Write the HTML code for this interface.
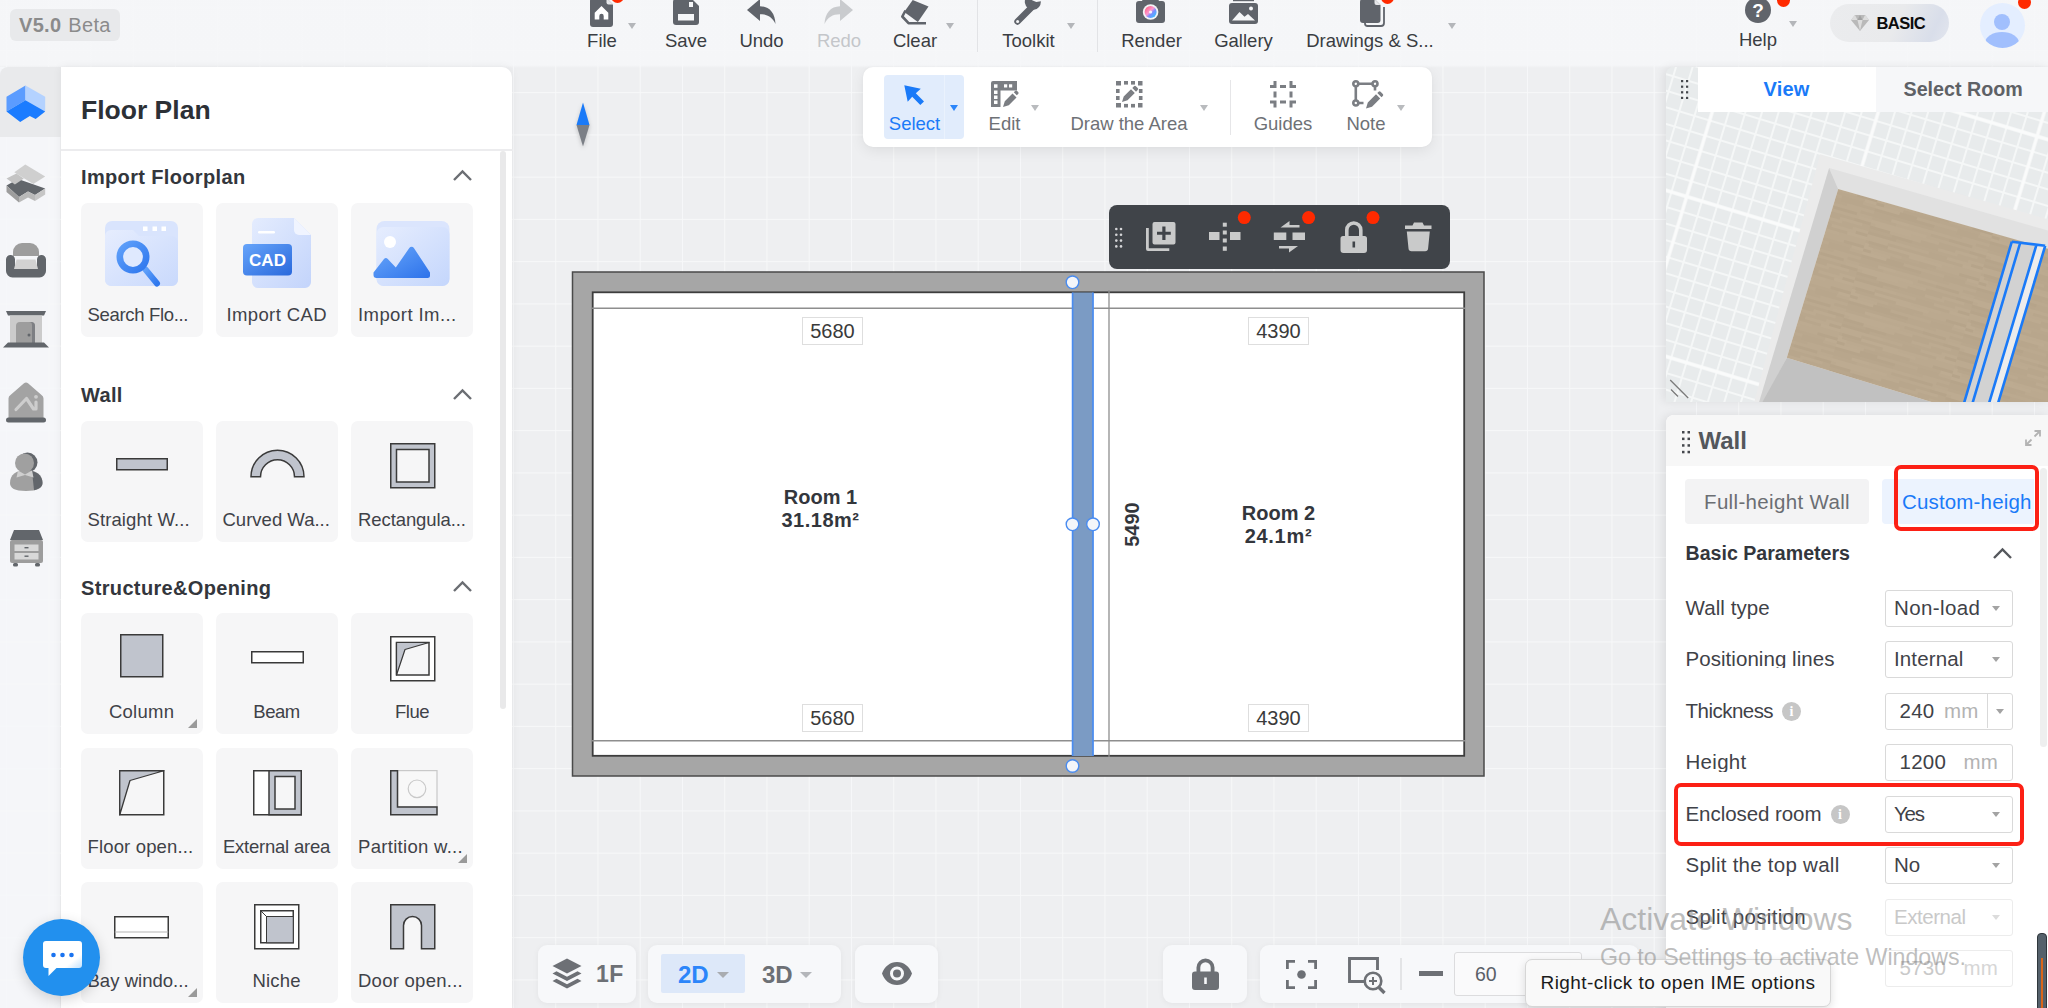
<!DOCTYPE html>
<html lang="en">
<head>
<meta charset="utf-8">
<title>Floor Plan Editor</title>
<style>
*{box-sizing:border-box;margin:0;padding:0}
html,body{width:2048px;height:1008px;overflow:hidden}
body{position:relative;font-family:"Liberation Sans",sans-serif;color:#33353a;background:#eeeff1;
 background-image:linear-gradient(to right,#f7f8f9 1px,transparent 1px),linear-gradient(to bottom,#f7f8f9 1px,transparent 1px);
 background-size:42.26px 42.26px;background-position:5.96px 7.68px;}
.abs{position:absolute}
svg{display:block;overflow:visible}
/* ---------- top bar ---------- */
#topbar{position:absolute;left:0;top:0;width:2048px;height:68px;background:linear-gradient(to bottom,rgba(246,247,249,.9) 0,rgba(246,247,249,.88) 65px,rgba(246,247,249,0) 68px)}
#ver{position:absolute;left:10px;top:9px;width:110px;height:32px;background:#e8e9eb;border-radius:6px;font-size:20px;letter-spacing:.3px;line-height:32px;color:#8b8b8b;padding-left:9px;white-space:nowrap}
#ver b{font-weight:700;margin-right:7px}
.tm{position:absolute;top:30px;font-size:18.5px;line-height:22px;color:#3a3d42;white-space:nowrap;transform:translateX(-50%)}
.tm.dis{color:#c4c6ca}
.caret{position:absolute;width:0;height:0;border-left:4.5px solid transparent;border-right:4.5px solid transparent;border-top:6px solid #b4b6ba}
.vdiv{position:absolute;width:1px;background:#e2e3e6}
.dot{position:absolute;width:13px;height:13px;border-radius:50%;background:#ff2a00}
/* ---------- left rail + panel ---------- */
#rail{position:absolute;left:0;top:67px;width:60px;height:942px;background:rgba(246,247,249,.88)}
#rail .act{position:absolute;left:0;top:0;width:61px;height:70px;background:#e9eaec;border-radius:8px 0 0 0}
#lpanel{position:absolute;left:60.5px;top:67px;width:451px;height:942px;background:#fff;border-radius:0 10px 0 0;box-shadow:0 0 10px rgba(0,0,0,.06)}
#lpanel h1{position:absolute;left:20.5px;top:27px;font-size:26.5px;line-height:32px;font-weight:700;color:#2c3036;white-space:nowrap}
#lpanel .hr{position:absolute;left:0;top:82px;width:452px;height:2px;background:#ececee}
.sec{position:absolute;left:81px;font-size:20px;line-height:24px;font-weight:700;color:#33363c;white-space:nowrap;letter-spacing:.35px}
.chev{position:absolute;left:453px}
.card{position:absolute;width:122px;height:121px;background:#f6f6f7;border-radius:7px}
.card span{position:absolute;left:0;right:0;bottom:11px;text-align:center;font-size:18.5px;letter-spacing:.2px;line-height:22px;color:#3f4248;white-space:nowrap}
.card svg{position:absolute}
.tri{position:absolute;right:6px;bottom:6px;width:0;height:0;border-left:9px solid transparent;border-bottom:9px solid #9a9a9a}
#lscroll{position:absolute;left:499.5px;top:151px;width:6px;height:558px;border-radius:3px;background:#e9e9ea}

/* ---------- canvas ---------- */
#tb2{position:absolute;left:863px;top:67px;width:569px;height:80px;background:#fff;border-radius:10px;box-shadow:0 4px 14px rgba(0,0,0,.07),0 0 3px rgba(0,0,0,.03)}
.t2{position:absolute;top:112.500px;font-size:18.500px;line-height:22px;color:#6e7176;white-space:nowrap;transform:translateX(-50%)}
.caret.g{border-top-color:#b9bbbe}
.caret.b{border-top-color:#2b85fa}
#dark{position:absolute;left:1109px;top:204.500px;width:341px;height:64px;background:#404449;border-radius:8px}
.dim{position:absolute;width:61px;height:28px;background:#fff;border:1.500px solid #dedede;font-size:20px;line-height:26px;text-align:center;color:#3a3a3a}
.rm{position:absolute;font-weight:700;font-size:20px;line-height:22.700px;color:#33363c;text-align:center;white-space:nowrap;transform:translateX(-50%)}

/* ---------- right ---------- */
#v3d{position:absolute;left:1665.500px;top:67px;width:383px;height:335px;border-radius:8px 0 0 0;overflow:hidden;background:#e9eced;box-shadow:-3px 0 10px rgba(0,0,0,.07)}
#tabV{position:absolute;left:1697.500px;top:67px;width:178px;height:45px;background:#fff;font-weight:700;font-size:20px;line-height:45px;text-align:center;color:#1a7af8;letter-spacing:.2px}
#tabS{position:absolute;left:1875.500px;top:67px;width:173px;height:45px;background:#f6f7f9;font-weight:700;font-size:19.700px;line-height:45px;color:#5e6166;padding-left:28px;white-space:nowrap}
#prop{position:absolute;left:1665.500px;top:415px;width:383px;height:600px;border-radius:8px 0 0 0;overflow:hidden;background:#fff;box-shadow:-3px 0 10px rgba(0,0,0,.08)}
#prop .hd{position:absolute;left:0;top:0;width:383px;height:51px;background:#f7f7f7}
#prop .hd b{position:absolute;left:33px;top:12px;font-size:24px;line-height:28px;color:#54575c}
.pl{position:absolute;left:1685.500px;font-size:20.500px;letter-spacing:.25px;line-height:24px;color:#3f4248;white-space:nowrap}
.pb{position:absolute;left:1885px;width:128px;height:37px;border:1.500px solid #d9d9d9;border-radius:3px;background:#fff;font-size:20.500px;letter-spacing:.25px;line-height:34px;color:#3f4248;padding-left:8px;white-space:nowrap}
.pb.dis{border-color:#ececec;color:#c9c9c9}
.pb em{font-style:normal;color:#b3b3b3;position:absolute}
.pb.dis em{color:#d6d6d6}
.pc{position:absolute;width:0;height:0;border-left:4.500px solid transparent;border-right:4.500px solid transparent;border-top:5.500px solid #a3a3a3}
.info{position:absolute;width:19px;height:19px;border-radius:50%;background:#c6c6c6;color:#fff;font-weight:700;font-size:14px;line-height:19px;text-align:center;font-family:"Liberation Serif",serif}
.redbox{position:absolute;border:4.500px solid #fc2015;border-radius:7px}
.wm{position:absolute;left:1600px;color:rgba(125,125,125,.5);white-space:nowrap}

/* ---------- bottom ---------- */
.bb{position:absolute;top:945px;height:58px;background:#f7f8fa;border-radius:9px;box-shadow:0 1px 6px rgba(0,0,0,.05)}
#tip{position:absolute;left:1525px;top:958.500px;width:306px;height:48.500px;background:#f9f9f9;border:1px solid #d6d6d6;border-radius:7px;box-shadow:0 3px 10px rgba(0,0,0,.13);font-size:19px;letter-spacing:.42px;line-height:24px;color:#1b1b1b;padding:11.500px 0 0 14.500px;white-space:nowrap}
#chat{position:absolute;left:23px;top:919px;width:77px;height:77px;border-radius:50%;background:#2290ee;box-shadow:0 4px 14px rgba(0,0,0,.16)}
</style>
</head>
<body>
<!-- CANVAS -->
<div id="canvas">
<!-- compass -->
<svg class="abs" style="left:575px;top:101px;filter:drop-shadow(0 2px 2px rgba(0,0,0,.18))" width="16" height="46" viewBox="0 0 16 46"><path d="M8 1.500L14.500 24h-13z" fill="#1a7af8"/><path d="M1.500 24h13L8 45.500z" fill="#7b7f86"/></svg>
<!-- secondary toolbar -->
<div id="tb2"></div>
<div class="abs" style="left:884px;top:75px;width:80px;height:64px;border-radius:4px;background:#e1ecfc"></div>
<div class="abs" style="left:944px;top:75px;width:1px;height:64px;background:#eaf2fd"></div>
<svg class="abs" style="left:904px;top:85px" width="21" height="21" viewBox="0 0 21 21"><path d="M.3 .3L16.800 3.800 11.800 8.200 20 16.500 16.300 20 8.200 11.800 3.700 16.800z" fill="#1a7af8"/></svg>
<div class="caret b" style="left:950px;top:105px"></div>
<div class="t2" style="left:914.500px;color:#1a7af8">Select</div>
<!-- edit -->
<svg class="abs" style="left:991px;top:81px" width="27" height="27" viewBox="0 0 27 27"><path d="M2 0h24v9.500H9.500V26H0V2a2 2 0 0 1 2-2z" fill="#7b7e83"/><g fill="#fff"><rect x="3" y="3.300" width="3.500" height="3.500"/><rect x="13" y="3.300" width="3.200" height="3.200"/><rect x="18" y="3.300" width="3.200" height="3.200"/><rect x="3" y="9.500" width="3.500" height="3.500"/><rect x="3" y="14.500" width="3.500" height="3.500"/><rect x="3" y="19.500" width="3.500" height="3.500"/></g><path d="M12 26l1.800-5.800L21.500 12.500l4 4-7.700 7.700zM22.800 11.200l1.300-1.300a1.400 1.400 0 0 1 2 0l1 1a1.400 1.400 0 0 1 0 2l-1.300 1.300z" fill="#7b7e83"/></svg>
<div class="caret g" style="left:1030.500px;top:105px"></div>
<div class="t2" style="left:1004.500px">Edit</div>
<!-- draw the area -->
<svg class="abs" style="left:1116px;top:81px" width="27" height="27" viewBox="0 0 27 27"><g fill="#7b7e83"><rect x="0" y="0" width="5" height="4.500"/><rect x="8" y="0" width="4" height="3.600"/><rect x="15" y="0" width="4" height="3.600"/><rect x="22" y="0" width="4.500" height="4.500"/><rect x="0" y="8" width="3.600" height="4"/><rect x="0" y="15" width="3.600" height="4"/><rect x="0" y="22" width="5" height="4.500"/><rect x="8" y="22.900" width="4" height="3.600"/><rect x="15" y="22.900" width="4" height="3.600"/><rect x="22" y="22" width="4.500" height="4.500"/><rect x="22.900" y="8" width="3.600" height="4"/><rect x="22.900" y="15" width="3.600" height="4"/><path d="M6 21l1.700-5.500L15 8.200l3.800 3.800-7.300 7.300zM16.300 7l1.700-1.700a1.300 1.300 0 0 1 1.900 0l1.800 1.800a1.300 1.300 0 0 1 0 1.900L20 10.700z"/></g></svg>
<div class="caret g" style="left:1199.500px;top:105px"></div>
<div class="t2" style="left:1129px">Draw the Area</div>
<div class="abs" style="left:1229.500px;top:80px;width:1.500px;height:55px;background:#e6e6e8"></div>
<!-- guides -->
<svg class="abs" style="left:1270px;top:81px" width="26" height="27" viewBox="0 0 26 27"><g fill="#7b7e83"><path d="M0 4h3.500V0H6.500V7H0zM26 4h-3.500V0H19.500V7H26zM0 22.500h3.500V26.500H6.500V19.500H0zM26 22.500h-3.500V26.500H19.500V19.500H26z"/><rect x="10" y="4" width="6" height="3"/><rect x="10" y="19.500" width="6" height="3"/><rect x="3.500" y="10.500" width="3" height="6"/><rect x="19.500" y="10.500" width="3" height="6"/></g></svg>
<div class="t2" style="left:1283px">Guides</div>
<!-- note -->
<svg class="abs" style="left:1352px;top:80px" width="31" height="29" viewBox="0 0 31 29"><g fill="none" stroke="#7b7e83" stroke-width="2.600"><path d="M6 3.800h14.500M3.800 6v14.500M23 6v4.500M6 23h5.500"/><circle cx="3.800" cy="3.800" r="2.500"/><circle cx="23" cy="3.800" r="2.500"/><circle cx="3.800" cy="23" r="2.500"/></g><path d="M14 28.500l1.800-6L24 14.300l4.200 4.200-8.200 8.200zM25.300 13l1.300-1.300a1.400 1.400 0 0 1 2 0l2.200 2.200a1.400 1.400 0 0 1 0 2L29.500 17.200z" fill="#7b7e83"/></svg>
<div class="caret g" style="left:1397px;top:105px"></div>
<div class="t2" style="left:1366px">Note</div>

<!-- floor plan -->
<svg class="abs" style="left:560px;top:260px" width="940" height="530" viewBox="560 260 940 530">
<rect x="572.500" y="272" width="911.500" height="504" fill="#a6a6a6" stroke="#4a4a4a" stroke-width="1.500"/>
<rect x="592.700" y="292.300" width="871.500" height="463.500" fill="#fff" stroke="#3d3d3d" stroke-width="1.800"/>
<path d="M592 308.200H1072M1093 308.200H1465M592 740.700H1072M1093 740.700H1465" stroke="#8e8e8e" stroke-width="1.600"/>
<path d="M1109 290V757" stroke="#8e8e8e" stroke-width="1.300"/>
<rect x="1072.300" y="292.500" width="21" height="463.500" fill="#7b9bc4"/>
<path d="M1072.600 292.500V756M1093 292.500V756" stroke="#4a8cf0" stroke-width="1.700"/>
<g fill="#f4f6fa" stroke="#4a8cf0" stroke-width="1.400"><circle cx="1072.500" cy="282.300" r="6.300"/><circle cx="1072.500" cy="524.300" r="6.300"/><circle cx="1093" cy="524.300" r="6.300"/><circle cx="1072.500" cy="766" r="6.300"/></g>
<text transform="translate(1138.500 524.500) rotate(-90)" text-anchor="middle" font-family="Liberation Sans, sans-serif" font-weight="700" font-size="20" fill="#33363c">5490</text>
</svg>
<div class="dim" style="left:802px;top:317px">5680</div>
<div class="dim" style="left:1248px;top:317px">4390</div>
<div class="dim" style="left:802px;top:703.500px">5680</div>
<div class="dim" style="left:1248px;top:703.500px">4390</div>
<div class="rm" style="left:820.500px;top:486px">Room 1<br><span style="letter-spacing:.5px">31.18m²</span></div>
<div class="rm" style="left:1278.500px;top:502px">Room 2<br><span style="letter-spacing:.7px">24.1m²</span></div>

<!-- dark floating toolbar -->
<div id="dark"></div>
<svg class="abs" style="left:1109px;top:204px" width="341" height="65" viewBox="1109 204 341 65">
<g fill="#d5d6d8"><circle cx="1116.300" cy="229" r="1.300"/><circle cx="1121" cy="229" r="1.300"/><circle cx="1116.300" cy="234.800" r="1.300"/><circle cx="1121" cy="234.800" r="1.300"/><circle cx="1116.300" cy="240.600" r="1.300"/><circle cx="1121" cy="240.600" r="1.300"/><circle cx="1116.300" cy="246.400" r="1.300"/><circle cx="1121" cy="246.400" r="1.300"/></g>
<g fill="#c9caca">
<!-- dup -->
<path d="M1154.500 222h19a2 2 0 0 1 2 2v18.500a2 2 0 0 1-2 2h-19a2 2 0 0 1-2-2V224a2 2 0 0 1 2-2zM1162.300 226.500v5.300H1157v3h5.300v5.300h3.200v-5.300h5.300v-3h-5.300v-5.300z" fill-rule="evenodd"/><path d="M1146 228h2.800v20.300h20.500v2.800H1148a2 2 0 0 1-2-2z"/>
<!-- split -->
<rect x="1209" y="232" width="10.500" height="8"/><rect x="1230" y="232" width="10.500" height="8"/><rect x="1222.800" y="222.700" width="4" height="4"/><rect x="1222.800" y="230.500" width="4" height="4"/><rect x="1222.800" y="238.500" width="4" height="4"/><rect x="1222.800" y="246.500" width="4" height="4.300"/>
<!-- swap -->
<rect x="1273.800" y="232.500" width="12.500" height="7.500"/><rect x="1292.500" y="232.500" width="12.500" height="7.500"/><path d="M1280.500 227.600l9-6.600v4h10v2.600zM1298 246l-9 6.600v-4h-10V246z"/>
<!-- lock -->
<path d="M1343 236h21.500a2.500 2.500 0 0 1 2.500 2.500V250a3 3 0 0 1-3 3h-20.500a3 3 0 0 1-3-3v-11.500a2.500 2.500 0 0 1 2.500-2.500zM1352.500 241.500v6h2.600v-6z" fill-rule="evenodd"/><path d="M1345 237v-7a8.800 8.800 0 0 1 17.600 0v7h-3.600v-7a5.200 5.200 0 0 0-10.400 0v7z"/>
<!-- trash -->
<path d="M1405 225.500h7.500l1.500-3h8.500l1.500 3h7.500v3.500h-26.500zM1406.800 231.500h23l-1.700 17a3 3 0 0 1-3 2.700h-13.600a3 3 0 0 1-3-2.700z"/>
</g>
<g fill="#ff2a00"><circle cx="1244.300" cy="217.600" r="6.500"/><circle cx="1308.600" cy="217.600" r="6.500"/><circle cx="1373" cy="217.600" r="6.500"/></g>
</svg>
</div>
<!-- TOPBAR -->
<div id="topbar">
<div id="ver"><b>V5.0</b>Beta</div>
<!-- File -->
<svg class="abs" style="left:590px;top:-2.500px" width="23" height="29" viewBox="0 0 23 29"><path d="M3 0h13.500L23 6.500V26a3 3 0 0 1-3 3H3a3 3 0 0 1-3-3V3a3 3 0 0 1 3-3z" fill="#60646b"/><path d="M16.500 0v4.500a2 2 0 0 0 2 2H23z" fill="#e6e7ea"/><path d="M4.700 14.700L11.500 8.100l6.800 6.600v6.800h-4.600v-3.600a2.200 2.200 0 0 0-4.400 0v3.600H4.700z" fill="#fff"/></svg>
<div class="dot" style="left:611px;top:-10px"></div>
<div class="caret" style="left:628px;top:22.5px"></div>
<div class="tm" style="left:602px">File</div>
<!-- Save -->
<svg class="abs" style="left:673px;top:-1px" width="26" height="26" viewBox="0 0 26 26"><path d="M3 0h16l7 7v16a3 3 0 0 1-3 3H3a3 3 0 0 1-3-3V3a3 3 0 0 1 3-3z" fill="#60646b"/><rect x="5" y="15" width="16" height="6.5" fill="#f5f6f8"/><rect x="16" y="3" width="4" height="5" fill="#f5f6f8"/></svg>
<div class="tm" style="left:686px">Save</div>
<!-- Undo -->
<svg class="abs" style="left:747px;top:-2px" width="29" height="27" viewBox="0 0 29 27"><path d="M0 12L13 1v7.2C22.5 8.5 28 15 28.5 26c-3-6.6-8-9.8-15.5-9.8V23z" fill="#60646b"/></svg>
<div class="tm" style="left:761.5px">Undo</div>
<!-- Redo -->
<svg class="abs" style="left:823.5px;top:-2px" width="29" height="27" viewBox="0 0 29 27"><path d="M29 12L16 1v7.2C6.5 8.5 1 15 .5 26c3-6.6 8-9.8 15.500-9.800V23z" fill="#c9cbce"/></svg>
<div class="tm dis" style="left:839px">Redo</div>
<!-- Clear -->
<svg class="abs" style="left:900px;top:-3px" width="30" height="29" viewBox="0 0 30 29"><path d="M4.2 15L12.7 3 28.5 9.6 17.9 25z" fill="#60646b"/><path d="M5.5 13.500L2.3 19.5 8.5 26.200H26" fill="none" stroke="#60646b" stroke-width="2.6" stroke-linejoin="round"/></svg>
<div class="caret" style="left:946px;top:22.5px"></div>
<div class="tm" style="left:915px">Clear</div>
<div class="vdiv" style="left:976.5px;top:0;height:52px"></div>
<!-- Toolkit -->
<svg class="abs" style="left:1013px;top:-6px" width="30" height="32" viewBox="0 0 30 32"><path d="M4.5 27.500L19 13" stroke="#60646b" stroke-width="6.4" stroke-linecap="round" fill="none"/><path d="M27.8 7.200a8 8 0 1 1-9.500-7.200l.8 6.3 4.2 1.600z" fill="#60646b"/><circle cx="4.6" cy="27.4" r="1.5" fill="#f5f6f8"/></svg>
<div class="caret" style="left:1067px;top:22.5px"></div>
<div class="tm" style="left:1028.500px">Toolkit</div>
<div class="vdiv" style="left:1097px;top:0;height:52px"></div>
<!-- Render -->
<svg class="abs" style="left:1136px;top:-3px" width="29" height="27" viewBox="0 0 29 27"><defs><linearGradient id="lens" x1="0" y1="0" x2="1" y2="1"><stop offset="0" stop-color="#ff4d6d"/><stop offset=".45" stop-color="#ff9ad0"/><stop offset=".6" stop-color="#7f8cff"/><stop offset="1" stop-color="#18d4ff"/></linearGradient></defs><path d="M8 0h13l2 4h3a3 3 0 0 1 3 3v16a3 3 0 0 1-3 3H3a3 3 0 0 1-3-3V7a3 3 0 0 1 3-3h3z" fill="#60646b"/><circle cx="14.6" cy="15" r="7.8" fill="#f3f3f6"/><circle cx="14.6" cy="15" r="6" fill="url(#lens)"/><circle cx="14.6" cy="15" r="1.6" fill="#fff" opacity=".85"/></svg>
<div class="tm" style="left:1151.500px">Render</div>
<!-- Gallery -->
<svg class="abs" style="left:1229px;top:-2px" width="29" height="27" viewBox="0 0 29 27"><rect x="4" y="0" width="21" height="3.2" fill="#60646b"/><rect x="0" y="5" width="29" height="21" rx="3" fill="#60646b"/><path d="M3 22.500L10.5 14l5 4.8 3.500-2.8 7 6.500z" fill="#f5f6f8"/><circle cx="22" cy="10.5" r="2" fill="#f5f6f8"/></svg>
<div class="tm" style="left:1243.500px">Gallery</div>
<!-- Drawings -->
<svg class="abs" style="left:1359.500px;top:-1.500px" width="26" height="28" viewBox="0 0 26 28"><path d="M5 8v16.500a2.500 2.500 0 0 0 2.500 2.500H21a3 3 0 0 0 3-3V8" fill="none" stroke="#60646b" stroke-width="1.800"/><path d="M3 0h11.500L20.500 6v15a3 3 0 0 1-3 3H3a3 3 0 0 1-3-3V3a3 3 0 0 1 3-3z" fill="#60646b"/><path d="M14.500 0v4a2 2 0 0 0 2 2h4z" fill="#e6e7ea"/></svg>
<div class="dot" style="left:1381px;top:-9px"></div>
<div class="caret" style="left:1447.500px;top:22.500px"></div>
<div class="tm" style="left:1370px">Drawings &amp; S...</div>
<!-- Help -->
<div class="abs" style="left:1745px;top:-3px;width:26px;height:26px;border-radius:50%;background:#60646b;color:#fff;font-weight:700;font-size:19px;line-height:27px;text-align:center">?</div>
<div class="dot" style="left:1776.500px;top:-6px"></div>
<div class="caret" style="left:1788.500px;top:21px"></div>
<div class="tm" style="left:1758px;top:28.500px">Help</div>
<!-- BASIC -->
<div class="abs" style="left:1830px;top:4px;width:119px;height:38px;border-radius:19px;background:linear-gradient(115deg,#ebecee 0,#e9eaec 55%,#d9deea 85%,#e3e6ee 100%)"></div>
<svg class="abs" style="left:1851px;top:15px" width="18" height="16" viewBox="0 0 18 16"><path d="M4 0h10l4 5-9 11L0 5z" fill="#b9b9b9"/><path d="M4 0l2.5 5H0zM14 0l-2.5 5H18zM6.5 5h5L9 16z" fill="#dcdcdc"/><path d="M6.5 5L9 0l2.5 5z" fill="#a2a2a2"/></svg>
<div class="abs" style="left:1876.500px;top:13px;font-size:16.500px;line-height:20px;font-weight:700;color:#0c0c0c;letter-spacing:-.55px">BASIC</div>
<!-- avatar -->
<div class="abs" style="left:1979.500px;top:2.500px;width:45px;height:45px;border-radius:50%;background:#e4eeff;overflow:hidden"><div class="abs" style="left:14.500px;top:11px;width:16px;height:16px;border-radius:50%;background:#a1bffd"></div><div class="abs" style="left:5.500px;top:29.500px;width:34px;height:22px;border-radius:50%;background:#a1bffd"></div></div>
<div class="dot" style="left:2018px;top:-4px"></div>
</div>
<!-- LEFT -->
<div id="rail"><div class="act"></div>
<!-- cube -->
<svg class="abs" style="left:6px;top:18px" width="40" height="38" viewBox="0 0 40 38"><path d="M19.500 .5L.5 11.800V26.600L19.500 15.300z" fill="#5b9cff"/><path d="M19.500 .5L39.200 11.800V26.600L19.500 15.300z" fill="#b4d2ff"/><path d="M.5 26.600L19.500 15.300 39.200 26.600 29.700 34 23.800 31 14.200 37z" fill="#1b7cff"/></svg>
<!-- layers -->
<svg class="abs" style="left:6px;top:97px" width="40" height="39" viewBox="0 0 40 39"><path d="M.5 21.500L12 15l27.200 9.500L29 31l-7-3.500-9 5.500z" fill="#62666b"/><path d="M.5 21.500L13 33v5.500L.5 28z" fill="#9d9d9d"/><path d="M13 33l9-5.500 7 3.500v6l-7-3.500-9 5z" fill="#b9b9b9"/><path d="M29 31l10.200-6.500v6L29 37z" fill="#c6c6c6"/><path d="M19.300 .6L39.200 12.500 27.300 20 8.300 8.200z" fill="#cfcfcf"/><path d="M.5 14.500L10.400 9.500 17.800 14.500 8.900 20.500z" fill="#c4c4c4"/></svg>
<!-- sofa -->
<svg class="abs" style="left:6px;top:176px" width="40" height="35" viewBox="0 0 40 35"><path d="M7 13V9a9 9 0 0 1 9-9h8a9 9 0 0 1 9 9v4z" fill="#9d9d9d"/><path d="M0 16.500a4.500 4.500 0 0 1 9 0V25h22v-8.500a4.500 4.500 0 0 1 9 0V28a6.500 6.500 0 0 1-6.500 6.500h-27A6.500 6.500 0 0 1 0 28z" fill="#62666b"/><path d="M10.500 16.500h19L32 26H8z" fill="#d2d2d2"/></svg>
<!-- door -->
<svg class="abs" style="left:3px;top:244px" width="46" height="37" viewBox="0 0 46 37"><path d="M3 0h40l-2 4.500H5z" fill="#62666b"/><rect x="7" y="4.500" width="32" height="27.500" fill="#cbcbcb"/><path d="M13 32V15a4 4 0 0 1 4-4h11a4 4 0 0 1 4 4v18.500z" fill="#9d9d9d"/><path d="M28 11a4 4 0 0 1 4 4v18.500l-3-.4V14a3 3 0 0 0-3-3z" fill="#7d7f83"/><circle cx="26" cy="24" r="1.500" fill="#62666b"/><path d="M5 31.500h36l5 5H0z" fill="#62666b"/></svg>
<!-- ai house -->
<svg class="abs" style="left:5px;top:315px" width="42" height="41" viewBox="0 0 42 41"><path d="M3.500 37V16.500a4 4 0 0 1 2-3.500L19 1.200a4 4 0 0 1 4 0L36.500 13a4 4 0 0 1 2 3.500V37z" fill="#a3a3a3"/><path d="M11 27.500L21.500 16.500 28.500 27h2.500V20" fill="none" stroke="#cdcdcd" stroke-width="3.200" stroke-linecap="round" stroke-linejoin="round"/><circle cx="31" cy="14.800" r="1.900" fill="#cdcdcd"/><rect x="1" y="35.500" width="40" height="5" rx="2.500" fill="#62666b"/></svg>
<!-- person -->
<svg class="abs" style="left:10px;top:385px" width="33" height="40" viewBox="0 0 33 40"><circle cx="17.500" cy="10.500" r="10" fill="#62666b"/><circle cx="14.500" cy="11" r="9.500" fill="#a0a0a0"/><path d="M0 31c0-8 6-13 16-13s16.500 5 16.500 13c0 5-5 8-16.500 8S0 36 0 31z" fill="#a0a0a0"/><path d="M22 19c6.500 1.500 10.500 6 10.500 12 0 3.500-3 6-8.500 7.200z" fill="#62666b"/><path d="M8 18.500l7 4 7-4 1.500 7-8.500-2.500L6.500 25.500z" fill="#cfcfcf"/></svg>
<!-- cabinet -->
<svg class="abs" style="left:10px;top:463px" width="33" height="37" viewBox="0 0 33 37"><path d="M4 0h25l4 10H0z" fill="#62666b"/><rect x="0" y="10" width="33" height="23" rx="2" fill="#9d9d9d"/><rect x="4.500" y="14.500" width="24" height="6.500" fill="#d8d8d8"/><rect x="4.500" y="23" width="24" height="6.500" fill="#d8d8d8"/><rect x="14.500" y="17" width="4" height="1.400" fill="#62666b"/><rect x="14.500" y="25.500" width="4" height="1.400" fill="#62666b"/><rect x="3" y="33" width="5" height="3.500" rx="1.500" fill="#62666b"/><rect x="25" y="33" width="5" height="3.500" rx="1.500" fill="#62666b"/></svg>
</div>
<div id="lpanel"><h1>Floor Plan</h1><div class="hr"></div></div>
<div id="lscroll"></div>
<div id="cards">
<div class="sec" style="top:164.5px">Import Floorplan</div><svg class="chev" style="top:170.0px" width="19" height="11" viewBox="0 0 19 11"><path d="M1 10L9.5 1.5 18 10" fill="none" stroke="#6b6e73" stroke-width="2.4"/></svg>
<div class="sec" style="top:383px">Wall</div><svg class="chev" style="top:388.5px" width="19" height="11" viewBox="0 0 19 11"><path d="M1 10L9.5 1.5 18 10" fill="none" stroke="#6b6e73" stroke-width="2.4"/></svg>
<div class="sec" style="top:575.5px">Structure&amp;Opening</div><svg class="chev" style="top:581.0px" width="19" height="11" viewBox="0 0 19 11"><path d="M1 10L9.5 1.5 18 10" fill="none" stroke="#6b6e73" stroke-width="2.4"/></svg>
<div class="card" style="left:80.5px;top:202.5px;height:134px"><svg style="left:24.5px;top:18px" width="74" height="66" viewBox="0 0 74 66"><defs><linearGradient id="sg1" x1="0" y1="0" x2="1" y2="1"><stop offset="0" stop-color="#e6edfe"/><stop offset="1" stop-color="#c9d9fc"/></linearGradient><linearGradient id="sg2" x1="0" y1="0" x2="1" y2="1"><stop offset="0" stop-color="#5fa0fa"/><stop offset="1" stop-color="#2f78ee"/></linearGradient></defs>
<rect x="0" y="0" width="73" height="65" rx="7" fill="#d9e4fd"/><path d="M0 15a6 6 0 0 1 6-6h22l6 6h33a6 6 0 0 1 6 6v38a6 6 0 0 1-6 6H6a6 6 0 0 1-6-6z" fill="url(#sg1)"/>
<rect x="38" y="5.500" width="4.500" height="4.500" fill="#fff"/><rect x="47.500" y="5.500" width="4.500" height="4.500" fill="#fff"/><rect x="56.500" y="5.500" width="4.500" height="4.500" fill="#fff"/>
<path d="M40.500 48.500L52 62.500" stroke="url(#sg2)" stroke-width="6" stroke-linecap="round"/><circle cx="28" cy="36" r="13.200" fill="#dfe9fe" stroke="url(#sg2)" stroke-width="6.600"/></svg><span style="text-align:left;padding-left:7px;letter-spacing:-0.33px">Search Flo...</span></div>
<div class="card" style="left:215.5px;top:202.5px;height:134px"><svg style="left:27px;top:15.5px" width="70" height="72" viewBox="0 0 70 72"><defs><linearGradient id="cg1" x1="0" y1="0" x2="1" y2="1"><stop offset="0" stop-color="#e4ecfe"/><stop offset="1" stop-color="#c3d4fb"/></linearGradient><linearGradient id="cg2" x1="0" y1="0" x2="1" y2="1"><stop offset="0" stop-color="#66a4fa"/><stop offset="1" stop-color="#2a69dc"/></linearGradient></defs>
<path d="M15 0h36l17 17v47a6 6 0 0 1-6 6H15a6 6 0 0 1-6-6V6a6 6 0 0 1 6-6z" fill="url(#cg1)"/><path d="M51 0v12a5 5 0 0 0 5 5h12z" fill="#f0f4ff"/><rect x="15" y="13" width="17" height="2.600" rx="1.300" fill="#fff"/>
<rect x="0" y="26" width="49" height="31.500" rx="4" fill="url(#cg2)"/><text x="24.500" y="48" text-anchor="middle" font-family="Liberation Sans, sans-serif" font-weight="700" font-size="17" fill="#fff">CAD</text></svg><span style="letter-spacing:0.39px;padding-left:0.39px">Import CAD</span></div>
<div class="card" style="left:351px;top:202.5px;height:134px"><svg style="left:19px;top:18px" width="80" height="68" viewBox="0 0 80 68"><defs><linearGradient id="ig1" x1="0" y1="0" x2="1" y2="1"><stop offset="0" stop-color="#e6edfe"/><stop offset="1" stop-color="#c4d6fc"/></linearGradient><linearGradient id="ig2" x1="0" y1="0" x2="1" y2="1"><stop offset="0" stop-color="#6aa8fb"/><stop offset="1" stop-color="#2d72ea"/></linearGradient></defs>
<rect x="6.500" y="0" width="73" height="65" rx="8" fill="#dbe5fd"/><rect x="6.500" y="6" width="73" height="59" rx="7" fill="url(#ig1)"/><circle cx="20" cy="21" r="6" fill="#fff"/>
<path d="M3.500 51.500L14 38a2.500 2.500 0 0 1 3.800 0l8 8.500 13.500-19.500a2.800 2.800 0 0 1 4.600 0L60 51.500v3a2.500 2.500 0 0 1-2.500 2.500h-51a3 3 0 0 1-3-3z" fill="url(#ig2)"/></svg><span style="text-align:left;padding-left:7px;letter-spacing:0.42px">Import Im...</span></div>
<div class="card" style="left:80.5px;top:420.5px;height:121px"><svg style="left:35px;top:37px" width="54" height="13" viewBox="0 0 54 13"><rect x=".75" y=".75" width="50.500" height="11" fill="#c0c4cd" stroke="#3a3a3a" stroke-width="1.500"/></svg><span style="text-align:left;padding-left:7px;letter-spacing:0.11px">Straight W...</span></div>
<div class="card" style="left:215.5px;top:420.5px;height:121px"><svg style="left:34px;top:29px" width="56" height="28" viewBox="0 0 56 28"><path d="M1 26.750A26.500 26.500 0 0 1 54 26.750H44.500A17 17 0 0 0 10.500 26.750z" fill="#c0c4cd" stroke="#3a3a3a" stroke-width="1.500"/></svg><span style="text-align:left;padding-left:7px;letter-spacing:0.01px">Curved Wa...</span></div>
<div class="card" style="left:351px;top:420.5px;height:121px"><svg style="left:39px;top:22.5px" width="46" height="46" viewBox="0 0 46 46"><rect x=".75" y=".75" width="44" height="44" fill="#c0c4cd" stroke="#3a3a3a" stroke-width="1.500"/><rect x="6.500" y="6.500" width="32.500" height="32.500" fill="#f6f6f7" stroke="#3a3a3a" stroke-width="1.500"/></svg><span style="text-align:left;padding-left:7px;letter-spacing:-0.09px">Rectangula...</span></div>
<div class="card" style="left:80.5px;top:613px;height:121px"><svg style="left:39.5px;top:21px" width="44" height="44" viewBox="0 0 44 44"><rect x=".75" y=".75" width="42" height="42" fill="#c0c4cd" stroke="#3a3a3a" stroke-width="1.500"/></svg><span style="letter-spacing:0.29px;padding-left:0.29px">Column</span><i class="tri"></i></div>
<div class="card" style="left:215.5px;top:613px;height:121px"><svg style="left:35px;top:37.5px" width="54" height="13" viewBox="0 0 54 13"><rect x=".75" y=".75" width="51.500" height="11" fill="#fff" stroke="#3a3a3a" stroke-width="1.500"/></svg><span style="letter-spacing:-0.46px;padding-left:-0.46px">Beam</span></div>
<div class="card" style="left:351px;top:613px;height:121px"><svg style="left:39px;top:22.5px" width="46" height="46" viewBox="0 0 46 46"><rect x=".75" y=".75" width="44" height="44" fill="#fff" stroke="#3a3a3a" stroke-width="1.500"/><rect x="6.500" y="6.500" width="32.500" height="32.500" fill="#f6f6f7" stroke="#3a3a3a" stroke-width="1.500"/><path d="M6.500 6.500H39L15 13.500 6.500 39z" fill="#c0c4cd" stroke="#3a3a3a" stroke-width="1.200" stroke-linejoin="round"/></svg><span style="letter-spacing:-0.5px;padding-left:-0.5px">Flue</span></div>
<div class="card" style="left:80.5px;top:747.5px;height:121px"><svg style="left:38.5px;top:22.5px" width="46" height="46" viewBox="0 0 46 46"><rect x=".75" y=".75" width="44" height="44" fill="#f6f6f7" stroke="#3a3a3a" stroke-width="1.500"/><path d="M.75 .75H44.750L11 10.500 .75 44.750z" fill="#c0c4cd" stroke="#3a3a3a" stroke-width="1.300" stroke-linejoin="round"/></svg><span style="text-align:left;padding-left:7px;letter-spacing:0.15px">Floor open...</span></div>
<div class="card" style="left:215.5px;top:747.5px;height:121px"><svg style="left:37px;top:22.5px" width="50" height="46" viewBox="0 0 50 46"><rect x=".75" y=".75" width="47.500" height="44" fill="#fff" stroke="#3a3a3a" stroke-width="1.500"/><rect x="16" y=".75" width="32.250" height="44" fill="#c0c4cd" stroke="#3a3a3a" stroke-width="1.500"/><rect x="22" y="6.500" width="20" height="32.500" fill="#f6f6f7" stroke="#3a3a3a" stroke-width="1.500"/></svg><span style="letter-spacing:-0.23px;padding-left:-0.23px">External area</span></div>
<div class="card" style="left:351px;top:747.5px;height:121px"><svg style="left:39px;top:22.5px" width="48" height="46" viewBox="0 0 48 46"><rect x="7.500" y=".6" width="39.500" height="36.500" fill="#f8f8f8" stroke="#c9c9c9" stroke-width="1.200"/><circle cx="27" cy="18.800" r="8.800" fill="none" stroke="#c9c9c9" stroke-width="1.200"/><path d="M.75 .75H7.500V37H47V44.750H.75z" fill="#c0c4cd" stroke="#3a3a3a" stroke-width="1.500"/></svg><span style="text-align:left;padding-left:7px;letter-spacing:0.3px">Partition w...</span><i class="tri"></i></div>
<div class="card" style="left:80.5px;top:882px;height:121px"><svg style="left:33.5px;top:34px" width="56" height="23" viewBox="0 0 56 23"><rect x=".75" y=".75" width="53.500" height="21" fill="#fff" stroke="#3a3a3a" stroke-width="1.500"/><path d="M.75 16H54.250" stroke="#b5b5b5" stroke-width="1"/></svg><span style="text-align:left;padding-left:7px;letter-spacing:0.03px">Bay windo...</span><i class="tri"></i></div>
<div class="card" style="left:215.5px;top:882px;height:121px"><svg style="left:38.5px;top:22px" width="46" height="46" viewBox="0 0 46 46"><rect x=".75" y=".75" width="44" height="44" fill="#fff" stroke="#3a3a3a" stroke-width="1.500"/><rect x="6.750" y="6.750" width="32.500" height="32" fill="#fff" stroke="#3a3a3a" stroke-width="1.500"/><rect x="12.500" y="12.500" width="26.750" height="26.250" fill="#c0c4cd" stroke="#3a3a3a" stroke-width="1"/><path d="M6.750 6.750L12.500 12.500" stroke="#3a3a3a" stroke-width="1"/></svg><span style="letter-spacing:0.18px;padding-left:0.18px">Niche</span></div>
<div class="card" style="left:351px;top:882px;height:121px"><svg style="left:39px;top:22px" width="46" height="46" viewBox="0 0 46 46"><path d="M.75 .75H44.750V44.750H31.500V21.500a9 9 0 0 0-18 0V44.750H.75z" fill="#c0c4cd" stroke="#3a3a3a" stroke-width="1.500"/></svg><span style="text-align:left;padding-left:7px;letter-spacing:0.26px">Door open...</span></div>
</div>
<!-- RIGHT -->
<div id="right">
<div id="v3d"><svg width="383" height="335" viewBox="0 0 383 335">
<defs>
<pattern id="g3" width="15.900" height="15.900" patternUnits="userSpaceOnUse" patternTransform="translate(20.700 129.600) rotate(16.800)"><rect width="15.900" height="15.900" fill="#e8ebec"/><path d="M0 0H15.900M0 15.900H15.900M0 0V15.900M15.900 0V15.900" stroke="#f5f7f7" stroke-width="2.100"/></pattern>
<pattern id="g3b" width="159" height="159" patternUnits="userSpaceOnUse" patternTransform="translate(20.700 129.600) rotate(16.800)"><path d="M0 0H159M0 159H159M0 0V159M159 0V159" stroke="#fafbfb" stroke-width="3.300"/></pattern>
<pattern id="wood" width="120" height="48" patternUnits="userSpaceOnUse" patternTransform="rotate(16)"><rect width="120" height="48" fill="#b9a78d"/><rect x="-14" y="0" width="35" height="3" fill="#b6a48a"/><rect x="21" y="0" width="32" height="3" fill="#bcaa90"/><rect x="53" y="0" width="36" height="3" fill="#b8a68c"/><rect x="89" y="0" width="23" height="3" fill="#bcaa90"/><rect x="112" y="0" width="33" height="3" fill="#b9a78d"/><rect x="-19" y="3" width="43" height="3" fill="#b8a68c"/><rect x="24" y="3" width="21" height="3" fill="#b6a48a"/><rect x="45" y="3" width="27" height="3" fill="#b8a68c"/><rect x="72" y="3" width="20" height="3" fill="#bcaa90"/><rect x="92" y="3" width="43" height="3" fill="#b9a78d"/><rect x="-20" y="6" width="19" height="3" fill="#bcaa90"/><rect x="-1" y="6" width="30" height="3" fill="#b6a48a"/><rect x="29" y="6" width="38" height="3" fill="#b9a78d"/><rect x="67" y="6" width="37" height="3" fill="#b9a78d"/><rect x="104" y="6" width="23" height="3" fill="#bcaa90"/><rect x="0" y="9" width="44" height="3" fill="#bcaa90"/><rect x="44" y="9" width="20" height="3" fill="#bba98f"/><rect x="64" y="9" width="19" height="3" fill="#b8a68c"/><rect x="83" y="9" width="25" height="3" fill="#bcaa90"/><rect x="108" y="9" width="18" height="3" fill="#b6a48a"/><rect x="-10" y="12" width="32" height="3" fill="#bcaa90"/><rect x="22" y="12" width="44" height="3" fill="#b8a68c"/><rect x="66" y="12" width="34" height="3" fill="#b8a68c"/><rect x="100" y="12" width="38" height="3" fill="#bdab91"/><rect x="-15" y="15" width="18" height="3" fill="#b9a78d"/><rect x="3" y="15" width="20" height="3" fill="#b6a48a"/><rect x="23" y="15" width="38" height="3" fill="#bdab91"/><rect x="61" y="15" width="31" height="3" fill="#bcaa90"/><rect x="92" y="15" width="44" height="3" fill="#bba98f"/><rect x="-22" y="18" width="26" height="3" fill="#bdab91"/><rect x="4" y="18" width="42" height="3" fill="#b8a68c"/><rect x="46" y="18" width="34" height="3" fill="#bdab91"/><rect x="80" y="18" width="18" height="3" fill="#bba98f"/><rect x="98" y="18" width="36" height="3" fill="#bba98f"/><rect x="-12" y="21" width="21" height="3" fill="#bdab91"/><rect x="9" y="21" width="30" height="3" fill="#bba98f"/><rect x="39" y="21" width="18" height="3" fill="#b9a78d"/><rect x="57" y="21" width="18" height="3" fill="#b8a68c"/><rect x="75" y="21" width="24" height="3" fill="#bba98f"/><rect x="99" y="21" width="33" height="3" fill="#b6a48a"/><rect x="-22" y="24" width="30" height="3" fill="#b6a48a"/><rect x="8" y="24" width="20" height="3" fill="#bcaa90"/><rect x="28" y="24" width="38" height="3" fill="#b8a68c"/><rect x="66" y="24" width="42" height="3" fill="#b9a78d"/><rect x="108" y="24" width="26" height="3" fill="#bdab91"/><rect x="-2" y="27" width="27" height="3" fill="#bdab91"/><rect x="25" y="27" width="18" height="3" fill="#b6a48a"/><rect x="43" y="27" width="42" height="3" fill="#bba98f"/><rect x="85" y="27" width="22" height="3" fill="#b8a68c"/><rect x="107" y="27" width="40" height="3" fill="#bba98f"/><rect x="0" y="30" width="19" height="3" fill="#b6a48a"/><rect x="19" y="30" width="43" height="3" fill="#b6a48a"/><rect x="62" y="30" width="23" height="3" fill="#b9a78d"/><rect x="85" y="30" width="35" height="3" fill="#b8a68c"/><rect x="-14" y="33" width="34" height="3" fill="#b8a68c"/><rect x="20" y="33" width="41" height="3" fill="#b8a68c"/><rect x="61" y="33" width="31" height="3" fill="#b9a78d"/><rect x="92" y="33" width="30" height="3" fill="#bba98f"/><rect x="-12" y="36" width="31" height="3" fill="#b8a68c"/><rect x="19" y="36" width="18" height="3" fill="#bdab91"/><rect x="37" y="36" width="43" height="3" fill="#bcaa90"/><rect x="80" y="36" width="27" height="3" fill="#bba98f"/><rect x="107" y="36" width="24" height="3" fill="#b8a68c"/><rect x="-12" y="39" width="37" height="3" fill="#b9a78d"/><rect x="25" y="39" width="36" height="3" fill="#bba98f"/><rect x="61" y="39" width="19" height="3" fill="#b8a68c"/><rect x="80" y="39" width="24" height="3" fill="#b6a48a"/><rect x="104" y="39" width="26" height="3" fill="#bba98f"/><rect x="-24" y="42" width="37" height="3" fill="#bdab91"/><rect x="13" y="42" width="44" height="3" fill="#bdab91"/><rect x="57" y="42" width="30" height="3" fill="#bba98f"/><rect x="87" y="42" width="20" height="3" fill="#bba98f"/><rect x="107" y="42" width="24" height="3" fill="#bcaa90"/><rect x="-20" y="45" width="25" height="3" fill="#bba98f"/><rect x="5" y="45" width="37" height="3" fill="#bdab91"/><rect x="42" y="45" width="29" height="3" fill="#bcaa90"/><rect x="71" y="45" width="32" height="3" fill="#b8a68c"/><rect x="103" y="45" width="36" height="3" fill="#b6a48a"/></pattern>
</defs>
<rect width="383" height="335" fill="url(#g3)"/><rect width="383" height="335" fill="url(#g3b)"/>
<!-- outer wall top (lightest) -->
<path d="M154.2 87.2 L384.5 153.0 L384.5 353.0 L83.5 353.0 Z" fill="#ebebeb"/>
<!-- inner wall back face -->
<path d="M163.1 101.0 L384.5 164.2 L384.5 183.0 L172.2 121.9 Z" fill="#e1e1e1"/>
<!-- inner left wall face -->
<path d="M163.1 101.0 L172.2 121.9 L120.8 290.8 L88.5 353.0 L92.5 337.0 Z" fill="#d0d0d0"/>
<!-- front inner face -->
<path d="M120.8 290.8 L324.5 353.0 L86.5 353.0 Z" fill="#c1c1c1"/>
<!-- floor -->
<path d="M172.2 121.9 L384.5 182.5 L384.5 353.0 L324.5 353.0 L120.8 290.8 Z" fill="url(#wood)"/>
<!-- selected wall -->
<path d="M345.8 174.7 L379.2 178.8 L327.5 353.0 L293.0 353.0 Z" fill="#d2d2d2"/>
<path d="M370.5 177.7 L379.2 178.8 L327.5 353.0 L318.8 353.0 Z" fill="#ececec"/>
<path d="M345.8 174.7 L293.0 353.0 M354.0 176.5 L301.5 353.0 M370.5 177.7 L318.0 353.0 M379.2 178.8 L327.0 353.0 M345.8 174.7 L379.2 178.8" stroke="#1a7af8" stroke-width="2.600" fill="none"/>
<!-- corner mark -->
<path d="M4.2 313.0 L22.2 331.0 M5.0 322.5 L12.0 329.5" stroke="#7a7a7a" stroke-width="1.300"/>
</svg></div>
<svg class="abs" style="left:1681px;top:79.500px" width="8" height="20" viewBox="0 0 8 20"><g fill="#45484d"><rect x="0" y="0" width="2.200" height="2.200"/><rect x="5" y="0" width="2.200" height="2.200"/><rect x="0" y="5.600" width="2.200" height="2.200"/><rect x="5" y="5.600" width="2.200" height="2.200"/><rect x="0" y="11.200" width="2.200" height="2.200"/><rect x="5" y="11.200" width="2.200" height="2.200"/><rect x="0" y="16.800" width="2.200" height="2.200"/><rect x="5" y="16.800" width="2.200" height="2.200"/></g></svg>
<div id="tabV">View</div><div id="tabS">Select Room</div>
<div id="prop"><div class="hd"><b>Wall</b>
<svg class="abs" style="left:16.500px;top:16px" width="9" height="23" viewBox="0 0 9 23"><g fill="#45484d"><rect x="0" y="0" width="2.500" height="2.500"/><rect x="5.500" y="0" width="2.500" height="2.500"/><rect x="0" y="6.600" width="2.500" height="2.500"/><rect x="5.500" y="6.600" width="2.500" height="2.500"/><rect x="0" y="13.200" width="2.500" height="2.500"/><rect x="5.500" y="13.200" width="2.500" height="2.500"/><rect x="0" y="19.800" width="2.500" height="2.500"/><rect x="5.500" y="19.800" width="2.500" height="2.500"/></g></svg>
<svg class="abs" style="left:359px;top:15px" width="16" height="16" viewBox="0 0 16 16"><path d="M9.500 1H15V6.500M15 1L9.500 6.500M6.500 15H1V9.500M1 15L6.500 9.500" fill="none" stroke="#b3b3b3" stroke-width="1.800"/></svg>
</div></div>
<div class="abs" style="left:1685px;top:479px;width:184px;height:45px;border-radius:4px;background:#f3f3f4;font-size:20.500px;letter-spacing:.34px;line-height:45px;text-align:center;color:#6b6e73;white-space:nowrap">Full-height Wall</div>
<div class="abs" style="left:1882px;top:479px;width:160px;height:45px;border-radius:4px 0 0 4px;background:#ecf3fe;font-size:20.500px;letter-spacing:.16px;line-height:45px;color:#1a7af8;white-space:nowrap;overflow:hidden;padding-left:20px"><span style="display:inline-block;width:129.400px;height:45px;overflow:hidden">Custom-height Wall</span></div>
<div class="abs" style="left:2034px;top:466px;width:14px;height:542px;background:#fff"></div>
<div class="abs" style="left:2040px;top:468px;width:7px;height:279px;border-radius:3.500px;background:#eeefef"></div>
<div class="redbox" style="left:1894px;top:465px;width:145px;height:66px"></div>
<div class="pl" style="top:541px;font-weight:700;font-size:19.600px;letter-spacing:0;color:#33363c">Basic Parameters</div>
<svg class="abs" style="left:1993px;top:547.500px" width="19" height="11" viewBox="0 0 19 11"><path d="M1 10L9.500 1.500 18 10" fill="none" stroke="#55585d" stroke-width="2.400"/></svg>
<div class="pl" style="top:595.5px;letter-spacing:0.09px">Wall type</div><div class="pb" style="top:589.5px;letter-spacing:0.4px">Non-load</div><i class="pc" style="left:1991.500px;top:605.500px"></i>
<div class="pl" style="top:646.9px;letter-spacing:0.05px;height:21.500px;overflow:hidden">Positioning lines</div><div class="pb" style="top:640.9px;letter-spacing:0.13px">Internal</div><i class="pc" style="left:1991.500px;top:657px"></i>
<div class="pl" style="top:698.5px;letter-spacing:-0.52px">Thickness</div><div class="pb" style="top:692.5px;padding-left:13.500px">240<em style="left:58px">mm</em></div><div class="abs" style="left:1986.500px;top:694px;width:1.500px;height:34px;background:#d9d9d9"></div><i class="pc" style="left:1995.500px;top:708.500px"></i><div class="info" style="left:1782px;top:702px">i</div>
<div class="pl" style="top:750.1px;letter-spacing:0.29px;height:21.500px;overflow:hidden">Height</div><div class="pb" style="top:744.1px;padding-left:13.500px">1200<em style="left:77.500px">mm</em></div>
<div class="pl" style="top:801.5px;letter-spacing:-0.06px">Enclosed room</div><div class="pb" style="top:795.5px;letter-spacing:-1.2px">Yes</div><i class="pc" style="left:1991.500px;top:811.500px"></i><div class="info" style="left:1830.500px;top:804.500px">i</div>
<div class="pl" style="top:853.2px;letter-spacing:0.26px">Split the top wall</div><div class="pb" style="top:847.2px;letter-spacing:-0.1px">No</div><i class="pc" style="left:1991.500px;top:863px"></i>
<div class="pl" style="top:904.5px;letter-spacing:0.3px">Split position</div><div class="pb dis" style="top:898.5px;letter-spacing:-0.46px">External</div><i class="pc" style="left:1991.500px;top:914.500px;border-top-color:#dcdcdc"></i>
<div class="pb dis" style="top:950.2px;padding-left:13.500px">5730<em style="left:77.500px">mm</em></div>
<div class="redbox" style="left:1673.500px;top:783px;width:350px;height:63px"></div>
<div class="abs" style="left:2036.500px;top:933px;width:10px;height:80px;background:#55616b;border-radius:4px 4px 0 0;border:1.500px solid #2f363c"></div>
<div class="abs" style="left:2040.500px;top:958px;width:2.500px;height:50px;background:#d9661a"></div>
</div>
<!-- BOTTOM -->
<div id="bottom">
<div class="bb" style="left:538px;width:98px"></div>
<svg class="abs" style="left:552px;top:958px" width="30" height="31" viewBox="0 0 30 31"><g fill="#6d7075"><path d="M15 .5L29.500 8 15 15.500 .5 8z"/><path d="M4.500 13.300L15 18.700 25.500 13.300 29.500 15.400 15 23 .5 15.400z"/><path d="M4.500 20.800L15 26.200 25.500 20.800 29.500 22.900 15 30.500 .5 22.900z"/></g></svg>
<div class="abs" style="left:596px;top:961px;font-size:23px;font-weight:700;line-height:26px;color:#6d7075;letter-spacing:.5px">1F</div>
<div class="bb" style="left:648px;width:193px"></div>
<div class="abs" style="left:661px;top:954px;width:84px;height:39px;background:#dde8f9;border-radius:2px"></div>
<div class="abs" style="left:678px;top:960.500px;font-size:24px;font-weight:700;line-height:27px;color:#2b85fa">2D</div>
<div class="caret" style="left:716.500px;top:971.500px;border-left-width:6px;border-right-width:6px;border-top-width:6.500px;border-top-color:#a9acb1"></div>
<div class="abs" style="left:762px;top:960.500px;font-size:24px;font-weight:700;line-height:27px;color:#6d7075">3D</div>
<div class="caret" style="left:800px;top:971.500px;border-left-width:6px;border-right-width:6px;border-top-width:6.500px;border-top-color:#b4b6ba"></div>
<div class="bb" style="left:855px;width:83px"></div>
<svg class="abs" style="left:882px;top:962px" width="30" height="23" viewBox="0 0 30 23"><path d="M15 0C8 0 2.500 4.500 0 11.500 2.500 18.500 8 23 15 23s12.500-4.500 15-11.500C27.500 4.500 22 0 15 0zm0 18.500a7 7 0 1 1 0-14 7 7 0 0 1 0 14zm0-3a4 4 0 1 0 0-8 4 4 0 0 0 0 8z" fill="#6d7075" fill-rule="evenodd"/></svg>
<div class="bb" style="left:1163px;width:83.500px"></div>
<svg class="abs" style="left:1191.500px;top:958px" width="27" height="32" viewBox="0 0 27 32"><path d="M3 13.500h21a3 3 0 0 1 3 3V29a3 3 0 0 1-3 3H3a3 3 0 0 1-3-3V16.500a3 3 0 0 1 3-3zM12.200 19.500v6.500h2.600v-6.500z" fill="#6d7075" fill-rule="evenodd"/><path d="M4.500 14V9.500a9 9 0 0 1 18 0V14h-3.800V9.500a5.200 5.200 0 0 0-10.400 0V14z" fill="#6d7075"/></svg>
<div class="bb" style="left:1259.500px;width:379px"></div>
<svg class="abs" style="left:1286px;top:959.500px" width="31" height="29" viewBox="0 0 31 29"><path d="M9 1.400H1.400V9M22 1.400h7.600V9M9 27.600H1.400V20M22 27.600h7.600V20" fill="none" stroke="#6d7075" stroke-width="2.800"/><circle cx="15.500" cy="14.500" r="4.300" fill="#6d7075"/></svg>
<svg class="abs" style="left:1348px;top:956.500px" width="38" height="37" viewBox="0 0 38 37"><path d="M16 24.500H1.500V1.500H29.500V13" fill="none" stroke="#6d7075" stroke-width="2.900"/><circle cx="25" cy="24" r="8.300" fill="none" stroke="#6d7075" stroke-width="2.600"/><path d="M31 30.500L36.500 36" stroke="#6d7075" stroke-width="3.400"/><path d="M25 20v8M21 24h8" stroke="#6d7075" stroke-width="2"/></svg>
<div class="abs" style="left:1400px;top:957.500px;width:1.500px;height:32px;background:#e3e4e6"></div>
<div class="abs" style="left:1418.500px;top:971px;width:24px;height:5px;background:#6d7075"></div>
<div class="abs" style="left:1453.500px;top:951.500px;width:128px;height:44.500px;border:1.500px solid #dcdcde;border-radius:3px;background:#fafafb;font-size:19.500px;line-height:42px;color:#5a6068;padding-left:20.500px">60</div>
<div id="tip">Right-click to open IME options</div>
<div class="wm" style="top:901px;font-size:32px;line-height:36px">Activate Windows</div>
<div class="wm" style="top:943.500px;font-size:23.200px;line-height:27px">Go to Settings to activate Windows.</div>
<div id="chat"><svg class="abs" style="left:20px;top:22px" width="39" height="37" viewBox="0 0 39 37"><defs><linearGradient id="cb" x1=".3" y1=".2" x2="1" y2="1"><stop offset="0" stop-color="#fff"/><stop offset=".55" stop-color="#fff"/><stop offset="1" stop-color="#9fd0fb"/></linearGradient></defs><path d="M3 0h33a3 3 0 0 1 3 3v21a3 3 0 0 1-3 3H13.500L5.500 35V27H3a3 3 0 0 1-3-3V3a3 3 0 0 1 3-3z" fill="url(#cb)"/><g fill="#1a73f0"><circle cx="10.500" cy="14" r="2.300"/><circle cx="19.500" cy="14" r="2.300"/><circle cx="28.500" cy="14" r="2.300"/></g></svg></div>
</div>
</body>
</html>
